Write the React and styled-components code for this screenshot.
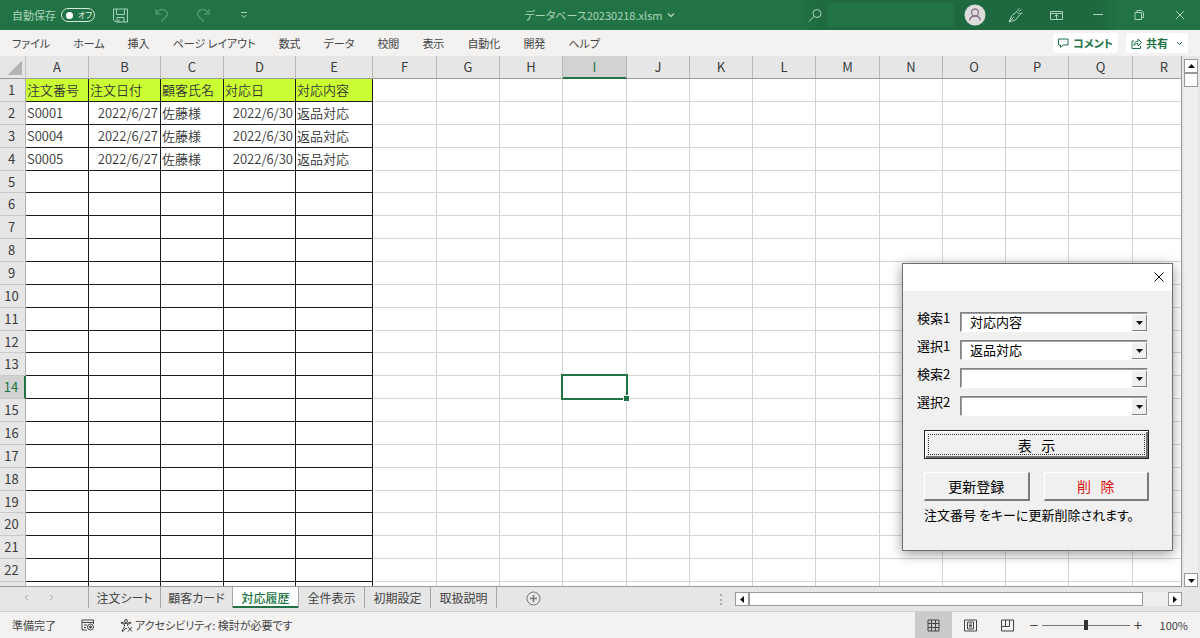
import React from "react";
import styled, { createGlobalStyle, css } from "styled-components";

const green = "#217346";
const uiFont = `"Noto Sans CJK JP", "Liberation Sans", sans-serif`;

const GlobalStyle = createGlobalStyle`
  *, *::before, *::after { box-sizing: border-box; }
  body { margin: 0; font-family: ${uiFont}; color: #444; }
  button, input, select { font: inherit; color: inherit; margin: 0; }
  button { padding: 0; border: 0; background: none; }
`;

const AppWindow = styled.div`
  height: 100vh;
  min-height: 600px;
  display: flex;
  flex-direction: column;
  position: relative;
  overflow: hidden;
  background: #e6e6e6;
`;

/* ---------- title bar ---------- */

const TitleBar = styled.header`
  flex: none;
  height: 30px;
  display: grid;
  grid-template-columns: 1fr auto 1fr;
  align-items: center;
  background: ${green};
  color: #a9d3ba;
  font-size: 11px;
  font-feature-settings: "palt";
`;

const QuickAccess = styled.div`
  display: flex;
  align-items: center;
  padding-left: 12px;
`;

const Switch = styled.button`
  display: flex;
  align-items: center;
  gap: 5px;
  width: 34px;
  height: 14px;
  margin: 0 5px;
  padding: 0 0 0 4px;
  border: 1px solid #d5eadd;
  border-radius: 7px;
  color: #e6f3eb;
  font-size: 8px;
  line-height: 12px;
  white-space: nowrap;
`;

const Knob = styled.span`
  flex: none;
  width: 7px;
  height: 7px;
  border-radius: 50%;
  background: #fff;
`;

const BarButton = styled.button`
  flex: none;
  display: flex;
  align-items: center;
  justify-content: center;
  width: 41px;
  height: 30px;
  opacity: ${(p) => (p.$dim ? 0.35 : 1)};
`;

const FileName = styled.button`
  display: flex;
  align-items: center;
  gap: 5px;
`;

const WindowTools = styled.div`
  justify-self: end;
  display: flex;
  align-items: center;
  height: 30px;
  background: linear-gradient(90deg, ${green} 0, #1f6940 30px, #1f6940 75%, ${green} 80%);
`;

const SearchBox = styled.label`
  display: flex;
  align-items: center;
  gap: 4px;
  width: 156px;
  padding-left: 10px;
`;

const SearchInput = styled.input`
  flex: 1;
  min-width: 0;
  height: 24px;
  border: 0;
  background: ${green};
  outline: 0;
`;

/* ---------- ribbon ---------- */

const Ribbon = styled.nav`
  flex: none;
  height: 26px;
  display: flex;
  align-items: center;
  padding: 0 12px;
  background: #f3f2f1;
  font-size: 11px;
  font-feature-settings: "palt";
`;

const RibbonTabs = styled.div`
  flex: 1;
  display: flex;
  gap: 23px;
`;

const RibbonTab = styled.button`
  line-height: 20px;
  white-space: nowrap;
`;

const RibbonAction = styled.button`
  display: flex;
  align-items: center;
  gap: 4px;
  height: 20px;
  margin-left: 8px;
  padding: 0 5px;
  border-radius: 2px;
  background: #fff;
  color: ${green};
  font-weight: 700;
`;

/* ---------- sheet ---------- */

const SheetArea = styled.main`
  flex: 1;
  min-height: 0;
  display: flex;
`;

const SheetViewport = styled.div`
  flex: 1;
  min-width: 0;
  overflow: hidden;
  background: #fff;
  border-right: 1px solid #999;
  border-bottom: 1px solid #999;
`;

const SheetTable = styled.table`
  table-layout: fixed;
  border-collapse: separate;
  border-spacing: 0;
  font-size: 13px;
  line-height: 20px;
  color: #3c3c3c;
`;

const Corner = styled.td`
  height: 23px;
  padding: 0;
  background: linear-gradient(135deg, #e6e6e6 50%, #b4b4b4 50%) 7px 5px / 15px 14px no-repeat #e6e6e6;
  border-right: 1px solid #c4c4c4;
  border-bottom: 1px solid #999;
`;

const ColumnHead = styled.th`
  padding: 0;
  font-weight: 400;
  background: #e6e6e6;
  border-right: 1px solid #b8b8b8;
  border-bottom: 1px solid #999;
  ${(p) => p.$active && css`
    background: #d2d2d2;
    color: ${green};
    border-bottom: 2px solid ${green};
  `}
`;

const RowHead = styled.th`
  padding: 0 2px 0 0;
  font-weight: 400;
  background: #e6e6e6;
  border-right: 1px solid #b0b0b0;
  border-bottom: 1px solid #c8c8c8;
  ${(p) => p.$active && css`
    background: #d2d2d2;
    color: ${green};
    border-right: 2px solid ${green};
  `}
`;

const SheetRow = styled.tr`
  height: ${(p) => (p.$short ? 22 : 23)}px;
`;

const Cell = styled.td`
  padding: 0 2px 1px 1px;
  white-space: nowrap;
  font-weight: 350;
  color: #333;
  text-align: ${(p) => p.$align || "left"};
  border-right: 1px solid ${(p) => (p.$boxed ? "#1c1c1c" : "#d4d4d4")};
  border-bottom: 1px solid ${(p) => (p.$boxed ? "#1c1c1c" : "#d4d4d4")};
  background: ${(p) => (p.$title ? "#ccff33" : "#fff")};
  ${(p) => p.$selected && css`
    position: relative;
    &::before {
      content: "";
      position: absolute;
      inset: -2px;
      border: 2px solid ${green};
    }
    &::after {
      content: "";
      position: absolute;
      right: -3px;
      bottom: -3px;
      width: 5px;
      height: 5px;
      background: ${green};
      outline: 1px solid #fff;
    }
  `}
`;

const VerticalScroll = styled.div`
  flex: none;
  width: 18px;
  display: flex;
  flex-direction: column;
  align-items: center;
  padding: 3px 0 0;
`;

const ScrollButton = styled.button`
  flex: none;
  display: flex;
  align-items: center;
  justify-content: center;
  width: 14px;
  height: 14px;
  background: #fff;
  border: 1px solid #999;
`;

const Track = styled.div`
  flex: 1;
  display: flex;
  flex-direction: ${(p) => (p.$vertical ? "column" : "row")};
  background: #efefef;
`;

const VerticalThumb = styled.div`
  width: 14px;
  height: 14px;
  background: #fff;
  border: 1px solid #999;
`;

const HorizontalThumb = styled.div`
  width: 94%;
  height: 14px;
  background: #fff;
  border: 1px solid #999;
`;

/* ---------- sheet tabs ---------- */

const TabStrip = styled.div`
  flex: none;
  height: 25px;
  display: flex;
  align-items: flex-start;
  border-bottom: 1px solid #cfcfcf;
  font-size: 12px;
  font-feature-settings: "palt";
`;

const TabArrows = styled.div`
  display: flex;
  align-items: center;
  gap: 20px;
  width: 89px;
  height: 21px;
  padding-left: 24px;
  border-right: 1px solid #a6a6a6;
`;

const SheetTab = styled.button`
  flex: none;
  width: ${(p) => (p.$wide ? 72 : 66)}px;
  height: 21px;
  line-height: 20px;
  white-space: nowrap;
  border-right: 1px solid #a6a6a6;
  ${(p) => p.$active && css`
    background: #fff;
    color: ${green};
    font-weight: 500;
    box-shadow: inset 0 -2px 0 ${green};
  `}
`;

const AddSheet = styled.button`
  flex: 1;
  height: 22px;
  padding-left: 29px;
  display: flex;
  align-items: center;
`;

const HorizontalScroll = styled.div`
  flex: none;
  width: 40%;
  display: flex;
  align-items: center;
  height: 22px;
  padding: 2px 18px 0 0;
`;

const Grip = styled.span`
  width: 2px;
  height: 11px;
  margin-right: 13px;
  border-left: 2px dotted #aaa;
`;

/* ---------- status bar ---------- */

const StatusBar = styled.footer`
  flex: none;
  height: 26px;
  display: flex;
  align-items: center;
  padding: 0 12px;
  background: #f3f2f1;
  font-size: 11px;
  font-feature-settings: "palt";
`;

const StatusItem = styled.span`
  display: flex;
  align-items: center;
  gap: 2px;
  margin-right: 25px;
  white-space: nowrap;
`;

const StatusSpacer = styled.span`
  flex: 1;
`;

const ViewButton = styled.button`
  display: flex;
  align-items: center;
  justify-content: center;
  width: 37px;
  height: 26px;
  background: ${(p) => (p.$active ? "#cdcbc9" : "transparent")};
`;

const ZoomStep = styled.button`
  width: 16px;
  font-size: 15px;
  line-height: 20px;
`;

const ZoomRange = styled.input`
  appearance: none;
  width: 88px;
  height: 12px;
  background: linear-gradient(#777, #777) center / 100% 1px no-repeat;
  &::-webkit-slider-thumb {
    appearance: none;
    width: 4px;
    height: 10px;
    background: #333;
  }
`;

const ZoomValue = styled.span`
  width: 42px;
  text-align: right;
`;

/* ---------- search form ---------- */

const Dialog = styled.form`
  position: absolute;
  top: 263px;
  right: 27px;
  width: 271px;
  border: 1px solid #6e6e6e;
  background: #f0f0f0;
  box-shadow: 0 3px 12px rgba(0, 0, 0, 0.4);
  font-size: 13px;
  color: #000;
`;

const DialogTitle = styled.div`
  height: 27px;
  display: flex;
  justify-content: flex-end;
  align-items: center;
  padding: 0 8px 2px 0;
  background: #fff;
`;

const DialogBody = styled.div`
  padding: 21px 23px 26px 21px;
`;

const Field = styled.div`
  display: flex;
  justify-content: space-between;
  height: 28px;
  margin: 0 1px 0 -7px;
`;

const FieldLabel = styled.label`
  line-height: 12px;
`;

const Combo = styled.span`
  display: grid;
  grid-template-columns: 1fr 15px;
  width: 188px;
  height: 20px;
  background: #fff;
  border: 1px solid #808080;
  border-right-color: #fff;
  border-bottom-color: #fff;
  box-shadow: inset 1px 1px 0 #a0a0a0;
`;

const ComboSelect = styled.select`
  grid-area: 1 / 1 / 2 / 3;
  appearance: none;
  min-width: 0;
  padding: 0 18px 0 9px;
  border: 0;
  background: transparent;
  line-height: 18px;
  outline: 0;
`;

const ComboArrow = styled.span`
  grid-area: 1 / 2;
  display: flex;
  align-items: center;
  justify-content: center;
  margin-top: 2px;
  background: #f0f0f0;
  border-right: 1px solid #808080;
  border-bottom: 1px solid #808080;
  pointer-events: none;
`;

const FormButton = styled.button`
  flex: 1;
  height: 29px;
  font-size: 14px;
  line-height: 20px;
  white-space: pre;
  color: ${(p) => (p.$danger ? "#e01010" : "#000")};
  background: #f0f0f0;
  border: 1px solid #fff;
  border-right: 2px solid #7a7a7a;
  border-bottom: 2px solid #7a7a7a;
  ${(p) => p.$primary && css`
    width: 100%;
    border: 1px solid #222;
    box-shadow: inset 1px 1px 0 #fff, inset -2px -2px 0 #707070;
    outline: 1px dotted #333;
    outline-offset: -5px;
  `}
`;

const ButtonStack = styled.div`
  padding-top: 6px;
`;

const ButtonRow = styled.div`
  display: flex;
  gap: 14px;
  margin: 13px 0 5px;
`;

const Note = styled.p`
  margin: 0;
  line-height: 18px;
  white-space: nowrap;
  font-feature-settings: "palt";
`;

/* ---------- icons ---------- */

function Icon({ w = 16, h = w, children, ...rest }) {
  return (
    <svg width={w} height={h} viewBox={`0 0 ${w} ${h}`} fill="none" stroke="currentColor" strokeWidth="1" aria-hidden="true" {...rest}>
      {children}
    </svg>
  );
}

const arrows = {
  up: "M0 5h7L3.5 1z",
  down: "M0 2h7L3.5 6z",
  left: "M5 0v7L1 3.5z",
  right: "M1 0v7l4-3.5z",
};

const Arrow = ({ dir }) => (
  <Icon w={7} stroke="none" fill="#111"><path d={arrows[dir]} /></Icon>
);

const Chevron = () => (
  <Icon w={8} strokeWidth="1.5"><path d="M1 2.5l3 3 3-3" /></Icon>
);

/* ---------- data ---------- */

const ribbonTabs = ["ファイル", "ホーム", "挿入", "ページ レイアウト", "数式", "データ", "校閲", "表示", "自動化", "開発", "ヘルプ"];

const columns = [
  ["A", 63], ["B", 72], ["C", 63], ["D", 72], ["E", 77], ["F", 64],
  ["G", 63], ["H", 63], ["I", 64], ["J", 63], ["K", 63], ["L", 63],
  ["M", 64], ["N", 63], ["O", 63], ["P", 63], ["Q", 64], ["R", 63],
];
const tableWidth = columns.reduce((sum, [, w]) => sum + w, 26);

const records = [
  ["注文番号", "注文日付", "顧客氏名", "対応日", "対応内容"],
  ["S0001", "2022/6/27", "佐藤様", "2022/6/30", "返品対応"],
  ["S0004", "2022/6/27", "佐藤様", "2022/6/30", "返品対応"],
  ["S0005", "2022/6/27", "佐藤様", "2022/6/30", "返品対応"],
];
const fullRows = 22;
const rowNumbers = Array.from({ length: fullRows + 1 }, (_, i) => i + 1);

const sheetTabs = ["注文シート", "顧客カード", "対応履歴", "全件表示", "初期設定", "取扱説明"];

const fields = [
  ["検索1", "対応内容"],
  ["選択1", "返品対応"],
  ["検索2", ""],
  ["選択2", ""],
];

/* ---------- sections ---------- */

function Title() {
  return (
    <TitleBar>
      <QuickAccess>
        <span id="autosave">自動保存</span>
        <Switch type="button" role="switch" aria-checked="false" aria-labelledby="autosave">
          <Knob />オフ
        </Switch>
        <BarButton aria-label="上書き保存">
          <Icon w={15}><path d="M.5 1h14v13H3L.5 12zM3.500 1v5.500h8V1M4 14V9.500h7V14M6 11.500V14" /></Icon>
        </BarButton>
        <BarButton $dim aria-label="元に戻す">
          <Icon w={14} strokeWidth="1.5"><path d="M1 1v5h5M1 6C4 1 9 0 11.5 3.5S11 9 6 13.5" /></Icon>
        </BarButton>
        <BarButton $dim aria-label="やり直し">
          <Icon w={14} strokeWidth="1.5"><path d="M13 1v5H8M13 6C10 1 5 0 2.5 3.5S3 9 8 13.5" /></Icon>
        </BarButton>
        <BarButton aria-label="ツールバーのカスタマイズ">
          <Icon w={8}><path d="M1 1.5h6M1.5 4l2.500 2.500L6.5 4" /></Icon>
        </BarButton>
      </QuickAccess>
      <FileName>データベース20230218.xlsm <Chevron /></FileName>
      <WindowTools>
        <SearchBox>
          <Icon w={15}><circle cx="9" cy="5.5" r="4" /><path d="M6 8.5L1 13.5" /></Icon>
          <SearchInput type="search" aria-label="検索" />
        </SearchBox>
        <BarButton aria-label="アカウント">
          <Icon w={22}>
            <circle cx="11" cy="11" r="10.5" fill="#dcdcdc" stroke="none" />
            <g stroke="#8b7389" strokeWidth="1.3"><circle cx="11" cy="8.5" r="3.5" /><path d="M5.500 16.500c1-6 10-6 11 0" /></g>
          </Icon>
        </BarButton>
        <BarButton aria-label="描画">
          <Icon w={15}><path d="M1 14l2.500-6L9 3.500l3 3L7.500 12zM1 14l5-5M9.500 3L11 .5M12 6l2.500-1M11.500 3.500l2-2" /></Icon>
        </BarButton>
        <BarButton aria-label="リボンの表示オプション">
          <Icon w={13} h={11}><path d="M.5 1.500h12v8H.5zM.5 3.500h12M6.500 9V5M4.500 6.500l2-2 2 2" /></Icon>
        </BarButton>
        <BarButton aria-label="最小化"><Icon w={10}><path d="M0 4.500h10" /></Icon></BarButton>
        <BarButton aria-label="元に戻す (縮小)">
          <Icon w={10}><path d="M1 2.500h6.500v7H1zM3 2.500v-2h4.500l2 2v5h-2" /></Icon>
        </BarButton>
        <BarButton aria-label="閉じる"><Icon w={10}><path d="M1 1l8 8M9 1L1 9" /></Icon></BarButton>
      </WindowTools>
    </TitleBar>
  );
}

function Sheet() {
  return (
    <SheetArea>
      <SheetViewport>
        <SheetTable style={{ width: tableWidth }}>
          <colgroup>
            <col width="26" />
            {columns.map(([name, w]) => <col key={name} width={w} />)}
          </colgroup>
          <thead>
            <tr>
              <Corner />
              {columns.map(([name]) => (
                <ColumnHead key={name} scope="col" $active={name === "I"}>{name}</ColumnHead>
              ))}
            </tr>
          </thead>
          <tbody>
            {rowNumbers.map((n) => (
              <SheetRow key={n} $short={n % 7 === 5}>
                <RowHead scope="row" $active={n === 14}>{n <= fullRows ? n : null}</RowHead>
                {columns.map(([name], c) => (
                  <Cell
                    key={name}
                    $boxed={c < 5}
                    $title={n === 1 && c < 5}
                    $align={n > 1 && (c === 1 || c === 3) ? "right" : "left"}
                    $selected={n === 14 && name === "I"}
                  >
                    {records[n - 1]?.[c]}
                  </Cell>
                ))}
              </SheetRow>
            ))}
          </tbody>
        </SheetTable>
      </SheetViewport>
      <VerticalScroll>
        <ScrollButton aria-label="上へ"><Arrow dir="up" /></ScrollButton>
        <Track $vertical><VerticalThumb /></Track>
        <ScrollButton aria-label="下へ"><Arrow dir="down" /></ScrollButton>
      </VerticalScroll>
    </SheetArea>
  );
}

function Tabs() {
  return (
    <TabStrip>
      <TabArrows>
        <Icon w={5} stroke="#aaa"><path d="M4 0L1 2.5 4 5" /></Icon>
        <Icon w={5} stroke="#aaa"><path d="M1 0l3 2.5L1 5" /></Icon>
      </TabArrows>
      {sheetTabs.map((name, i) => (
        <SheetTab key={name} $wide={i < 2} $active={i === 2}>{name}</SheetTab>
      ))}
      <AddSheet aria-label="新しいシート">
        <Icon w={15} stroke="#777"><circle cx="7.5" cy="7.5" r="6.5" /><path strokeWidth="1.5" d="M7.5 4v7M4 7.5h7" /></Icon>
      </AddSheet>
      <HorizontalScroll>
        <Grip />
        <ScrollButton aria-label="左へ"><Arrow dir="left" /></ScrollButton>
        <Track><HorizontalThumb /></Track>
        <ScrollButton aria-label="右へ"><Arrow dir="right" /></ScrollButton>
      </HorizontalScroll>
    </TabStrip>
  );
}

function Status() {
  return (
    <StatusBar>
      <StatusItem>準備完了</StatusItem>
      <StatusItem>
        <Icon w={14} h={12}><path d="M12.5 5V1H1v10h5M1 3.5h11.5M3 6h3M3 8.5h2" /><circle cx="9.5" cy="8" r="3" /><circle cx="9.5" cy="8" r="1" fill="currentColor" /></Icon>
      </StatusItem>
      <StatusItem>
        <Icon w={13}><circle cx="6" cy="2" r="1.5" /><path d="M1 4l3.5 1.5v2L2 12l1 .5L6 9l1 1M11 4L7.5 5.5V7M1 4l.5-1L5 4.5h2L10.5 3l.5 1M8 8l4 4.5M12 8l-4 4.5" /></Icon>
        アクセシビリティ: 検討が必要です
      </StatusItem>
      <StatusSpacer />
      <ViewButton $active aria-label="標準">
        <Icon w={13}><path d="M1 1h11v11H1zM4.5 1v11M8.5 1v11M1 4.5h11M1 8.5h11" /></Icon>
      </ViewButton>
      <ViewButton aria-label="ページ レイアウト">
        <Icon w={13}><path d="M.5 1h12v11H.5zM3.5 3h6v7h-6zM5 5h3M5 6.5h3M5 8h3" /></Icon>
      </ViewButton>
      <ViewButton aria-label="改ページ プレビュー">
        <Icon w={13}><path d="M.5 1h12v11H.5zM4.5 1v6.5M.5 7.5h8V1" /></Icon>
      </ViewButton>
      <ZoomStep aria-label="縮小">−</ZoomStep>
      <ZoomRange type="range" min="0" max="200" defaultValue="100" aria-label="ズーム" />
      <ZoomStep aria-label="拡大">+</ZoomStep>
      <ZoomValue>100%</ZoomValue>
    </StatusBar>
  );
}

function SearchForm() {
  return (
    <Dialog onSubmit={(e) => e.preventDefault()}>
      <DialogTitle>
        <button type="button" aria-label="閉じる">
          <Icon w={10} style={{ display: "block" }}><path d="M.5.5l9 9M9.5.5l-9 9" /></Icon>
        </button>
      </DialogTitle>
      <DialogBody>
        {fields.map(([label, value], i) => (
          <Field key={label}>
            <FieldLabel htmlFor={`field${i}`}>{label}</FieldLabel>
            <Combo>
              <ComboSelect id={`field${i}`} defaultValue={value}>
                <option>{value}</option>
              </ComboSelect>
              <ComboArrow><Arrow dir="down" /></ComboArrow>
            </Combo>
          </Field>
        ))}
        <ButtonStack>
          <FormButton $primary>{"表   示"}</FormButton>
          <ButtonRow>
            <FormButton type="button">更新登録</FormButton>
            <FormButton type="button" $danger>{"削   除"}</FormButton>
          </ButtonRow>
        </ButtonStack>
        <Note>注文番号 をキーに更新削除されます。</Note>
      </DialogBody>
    </Dialog>
  );
}

export default function App() {
  return (
    <>
      <GlobalStyle />
      <AppWindow>
        <Title />
        <Ribbon>
          <RibbonTabs>
            {ribbonTabs.map((name) => <RibbonTab key={name}>{name}</RibbonTab>)}
          </RibbonTabs>
          <RibbonAction>
            <Icon w={11}><path d="M.5 1h9.500v6H5l-2.500 2.500V7h-2z" /></Icon>コメント
          </RibbonAction>
          <RibbonAction>
            <Icon w={11}><path d="M3 3H1v7.500h8.500V8M3 7.500c0-3 1.500-4 4-4V1l3.500 3.500L7 8V5.500C5 5.500 4 6 3 7.500z" /></Icon>共有
            <Icon w={11}><path d="M5 4l2.500 2.500L10 4" /></Icon>
          </RibbonAction>
        </Ribbon>
        <Sheet />
        <Tabs />
        <Status />
        <SearchForm />
      </AppWindow>
    </>
  );
}
